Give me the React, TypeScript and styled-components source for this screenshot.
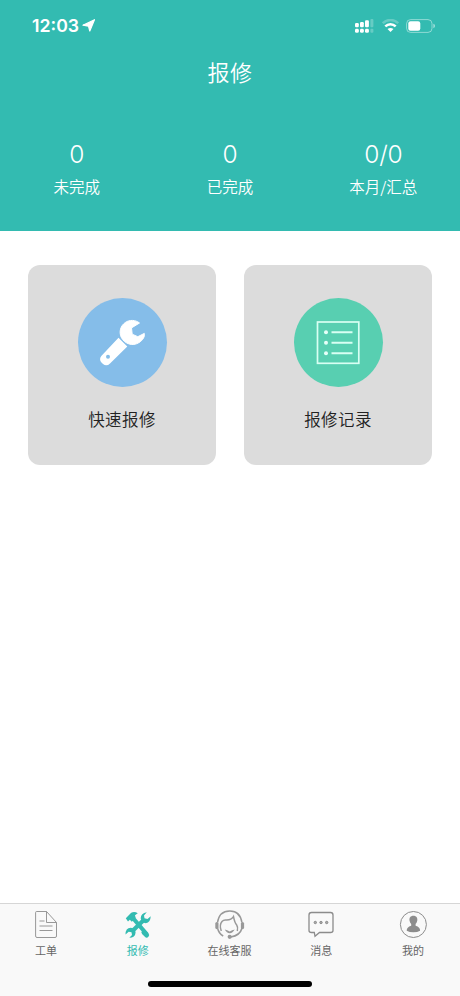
import React from "react";
import styled, { createGlobalStyle } from "styled-components";

const GlobalStyle = createGlobalStyle`
  * { box-sizing: border-box; }
  body { margin: 0; background: #fff; }
`;

const Screen = styled.div`
  width: 460px;
  height: 996px;
  display: flex;
  flex-direction: column;
  overflow: hidden;
  background: #fff;
  font-family: "Noto Sans CJK SC", sans-serif;
`;

const Header = styled.header`
  height: 231px;
  flex: none;
  background: #33bbb1;
  color: #fff;
`;

const StatusBar = styled.div`
  height: 51px;
  padding: 0 24px 0 32px;
  display: flex;
  align-items: center;
  justify-content: space-between;
`;

const Clock = styled.div`
  display: flex;
  align-items: center;
  gap: 3px;
  font: 600 17.7px/20px Inter, sans-serif;
`;

const StatusIcons = styled.div`
  display: flex;
  align-items: center;
  gap: 7.5px;
`;

const Title = styled.h1`
  margin: 4px 0 0;
  font-size: 22px;
  line-height: 32px;
  font-weight: 350;
  letter-spacing: 0.4px;
  text-align: center;
`;

const Stats = styled.div`
  display: grid;
  grid-template-columns: repeat(3, 1fr);
  margin-top: 51px;
`;

const Stat = styled.div`
  display: flex;
  flex-direction: column;
  align-items: center;
`;

const StatValue = styled.div`
  font: 350 24.5px/32px Inter, sans-serif;
  letter-spacing: -0.2px;
`;

const StatLabel = styled.div`
  margin-top: 4px;
  font-size: 15.5px;
  font-weight: 350;
  line-height: 24px;
`;

const Cards = styled.main`
  flex: 1;
  display: grid;
  grid-template-columns: 1fr 1fr;
  gap: 28px;
  align-items: start;
  padding: 34px 28px;
`;

const Card = styled.button`
  height: 199.5px;
  padding: 33px 0 0;
  border: 0;
  border-radius: 12px;
  background: #dcdcdc;
  display: flex;
  flex-direction: column;
  align-items: center;
  font-family: inherit;
`;

const Disc = styled.div<{ $color: string }>`
  width: 89px;
  height: 89px;
  border-radius: 50%;
  background: ${(p) => p.$color};
`;

const CardLabel = styled.div`
  margin-top: 20px;
  font-size: 16.5px;
  font-weight: 350;
  line-height: 24px;
  letter-spacing: 0.4px;
  color: #222;
`;

const TabBar = styled.nav`
  height: 93px;
  flex: none;
  border-top: 1px solid #d6d6d6;
  background: #f9f9f9;
`;

const Tabs = styled.div`
  display: grid;
  grid-template-columns: repeat(5, 1fr);
  width: 459px;
  height: 77px;
`;

const Tab = styled.div<{ $active?: boolean }>`
  display: flex;
  flex-direction: column;
  align-items: center;
  padding-top: 5px;
  color: ${(p) => (p.$active ? "#33bbb1" : "#8c8c8c")};
`;

const TabLabel = styled.div<{ $active?: boolean }>`
  font-size: 11px;
  line-height: 18px;
  font-weight: 400;
  color: ${(p) => (p.$active ? "#33bbb1" : "#666")};
`;

const HomeIndicator = styled.div`
  width: 164px;
  height: 6px;
  margin: 0 auto;
  border-radius: 3px;
  background: #000;
`;

const LocationArrow = () => (
  <svg width="13" height="13" viewBox="0 0 13 13">
    <path d="M12.5.7 7.8 12 6.5 7.2.9 6.2Z" fill="#fff" stroke="#fff" strokeWidth="1.2" strokeLinejoin="round" />
  </svg>
);

const Signal = () => (
  <svg width="19" height="14" viewBox="0 0 19 14" fill="#fff">
    <rect x="0" y="4" width="3.8" height="4.2" rx="1.2" />
    <rect x="5" y="3" width="3.8" height="5.2" rx="1.2" />
    <rect x="10" y="1.2" width="3.9" height="7" rx="1.2" />
    <rect x="15.4" y="0" width="3" height="8.2" rx="1" opacity=".25" />
    <rect x="0" y="9.8" width="3.8" height="4" rx="1.4" />
    <rect x="5" y="9.8" width="3.8" height="4" rx="1.4" />
    <rect x="10" y="9.8" width="3.9" height="4" rx="1.4" />
    <rect x="15.4" y="9.8" width="3" height="4" rx="1" opacity=".25" />
  </svg>
);

const Wifi = () => (
  <svg width="17" height="13" viewBox="0 0 17 13" fill="none" stroke="#fff" strokeWidth="2.5">
    <path d="M.8 4.2C5-.1 12-.1 16.2 4.2" opacity=".25" />
    <path d="M3.3 7.4C6.2 4.5 10.8 4.5 13.7 7.4" />
    <path d="M8.5 13 5.5 10Q8.5 7.8 11.5 10Z" fill="#fff" stroke="none" />
  </svg>
);

const Battery = () => (
  <svg width="30" height="14" viewBox="0 0 30 14">
    <rect x=".6" y=".6" width="25.4" height="12.8" rx="4" fill="none" stroke="#fff" strokeOpacity=".45" />
    <rect x="2.3" y="2.3" width="12" height="9.4" rx="2.2" fill="#fff" />
    <path d="M27.4 4.8Q29 5.4 29 7T27.4 9.2Z" fill="#fff" opacity=".55" />
  </svg>
);

const WrenchIcon = () => (
  <svg width="89" height="89" viewBox="0 0 89 89" fill="#fff">
    <path d="M61.5 25C57.5 21.8 51.5 21.5 47.3 24.5C42.3 28 40.9 34 43.2 39.2C46.4 45.8 54.5 48.6 60.8 44.7C65 42.2 67 38.5 66.3 35.4L59.8 38.7L54.2 36.2L53.5 29.9Z" stroke="#fff" strokeWidth="1" strokeLinejoin="round" />
    <path d="M40.500 39.800 49.300 48.600 32 65.400Q28.500 68.800 25 65.900L23 63.900Q21 61 23.300 58Z" />
    <circle cx="30" cy="58.7" r="2" fill="#85bde9" />
  </svg>
);

const ListIcon = () => (
  <svg width="89" height="89" viewBox="0 0 89 89" fill="none" stroke="#d8fff3" strokeWidth="1.7">
    <rect x="23.5" y="24" width="41.3" height="41.3" />
    <path d="M37.5 34.3H58.5M37.5 44.7H58.5M37.5 55.3H58.5" strokeWidth="2" />
    <g fill="#e6fff8" stroke="none">
      <circle cx="32" cy="34.3" r="2" />
      <circle cx="32" cy="44.7" r="2" />
      <circle cx="32" cy="55.3" r="2" />
    </g>
  </svg>
);

const iconProps = { width: 32, height: 32, viewBox: "0 0 32 32", fill: "none", stroke: "currentColor" };

const OrderIcon = () => (
  <svg {...iconProps} strokeWidth=".9">
    <path d="M5.6 3.5Q5.6 2.5 6.6 2.5H16.5L26.5 13.5V27Q26.5 28.5 25 28.5H7Q5.6 28.5 5.6 27ZM16.5 2.5V13.5H26.5M9.5 12H14.5M9.5 17H22.5M9.5 21.5H22.5" />
  </svg>
);

const ToolsIcon = () => (
  <svg {...iconProps}>
    <path d="M10.5 8.5 25 25.5" strokeWidth="4.2" />
    <path d="M22 23.5 24.6 26" strokeWidth="5" strokeLinecap="round" />
    <path d="M21.5 11.2 10.2 22.3" strokeWidth="4.2" />
    <path d="M3.8 9.3 9.2 3.8Q12.5 2.2 15.8 4.3L13 6.2 13.7 9 9.8 12.8 7.8 10.8 6 12.4Z" fill="currentColor" stroke="none" />
    <path d="M24.8 3.2Q18.8 4 18.7 9.2 19.5 14 23.8 14.2 28.5 13.5 28.7 7.2L25.5 10 22.5 9.3 22 6.5Z" fill="currentColor" stroke="none" />
    <path d="M3.5 25.5Q3.4 19 8.8 18.7 13.3 19.3 13.6 23.5 13.2 28.8 7.3 28.8L10 26 9.5 23.2 6.7 22.8Z" fill="currentColor" stroke="none" />
  </svg>
);

const ServiceIcon = () => (
  <svg {...iconProps} viewBox="-0.7 0 32 32" stroke="#999" strokeWidth="1.5">
    <path d="M3.8 13.5Q5.5 2 16 1.9T28.2 13.5M4 19.5Q5 24.5 9.5 27M28.3 19Q26.5 26.5 17 28" />
    <path d="M7.6 22Q5.3 16 8.3 12.5Q9.7 10.8 12 10.9Q17.5 11.3 19.8 7.6Q21 13.8 23 16Q24.5 18 23.6 22" />
    <path d="M11 20.5Q13.5 21.2 16 22.5 18.5 21.2 21 20.5 19 24.2 16 24.3 13 24.2 11 20.5Z" fill="#999" stroke="none" />
    <rect x="1.6" y="13" width="3.2" height="7.2" rx="1.6" fill="#999" stroke="none" />
    <rect x="27.2" y="13" width="3.2" height="7.2" rx="1.6" fill="#999" stroke="none" />
    <circle cx="16" cy="27.8" r="2.1" fill="#999" stroke="none" />
  </svg>
);

const MessageIcon = () => (
  <svg {...iconProps} strokeWidth="1.3">
    <path d="M6.5 3.5H25.5Q28 3.5 28 6V21.5Q28 23.5 25.5 23.5H14.5L10 27.3 9.3 23.5H6.5Q4 23.5 4 21.5V6Q4 3.5 6.5 3.5Z" />
    <g strokeWidth="1" fill="#aaa">
      <circle cx="10.3" cy="13.5" r="1.2" />
      <circle cx="16" cy="13.5" r="1.2" />
      <circle cx="21.7" cy="13.5" r="1.2" />
    </g>
  </svg>
);

const ProfileIcon = () => (
  <svg {...iconProps} viewBox="-0.4 0 32 32" strokeWidth="1">
    <circle cx="16" cy="15.5" r="13" />
    <path
      d="M16 6.8C19 6.8 20.3 9 19.9 11.5Q19.5 13.5 18.2 15V16.7Q22.8 18 22.7 21.7Q20 23.2 16 23.2T9.3 21.7Q9.2 18 13.8 16.7V15Q12.5 13.5 12.1 11.5C11.7 9 13 6.8 16 6.8Z"
      fill="currentColor"
      stroke="none"
    />
  </svg>
);

const stats = [
  { value: "0", label: "未完成" },
  { value: "0", label: "已完成" },
  { value: "0/0", label: "本月/汇总" },
];

const cards = [
  { label: "快速报修", color: "#85bde9", Icon: WrenchIcon },
  { label: "报修记录", color: "#58cfb1", Icon: ListIcon },
];

const tabs = [
  { label: "工单", Icon: OrderIcon },
  { label: "报修", Icon: ToolsIcon, active: true },
  { label: "在线客服", Icon: ServiceIcon },
  { label: "消息", Icon: MessageIcon },
  { label: "我的", Icon: ProfileIcon },
];

export default function App() {
  return (
    <Screen>
      <GlobalStyle />
      <Header>
        <StatusBar>
          <Clock>
            12:03
            <LocationArrow />
          </Clock>
          <StatusIcons>
            <Signal />
            <Wifi />
            <Battery />
          </StatusIcons>
        </StatusBar>
        <Title>报修</Title>
        <Stats>
          {stats.map((s) => (
            <Stat key={s.label}>
              <StatValue>{s.value}</StatValue>
              <StatLabel>{s.label}</StatLabel>
            </Stat>
          ))}
        </Stats>
      </Header>
      <Cards>
        {cards.map(({ label, color, Icon }) => (
          <Card key={label}>
            <Disc $color={color}>
              <Icon />
            </Disc>
            <CardLabel>{label}</CardLabel>
          </Card>
        ))}
      </Cards>
      <TabBar>
        <Tabs>
          {tabs.map(({ label, Icon, active }) => (
            <Tab key={label} $active={active}>
              <Icon />
              <TabLabel $active={active}>{label}</TabLabel>
            </Tab>
          ))}
        </Tabs>
        <HomeIndicator />
      </TabBar>
    </Screen>
  );
}
